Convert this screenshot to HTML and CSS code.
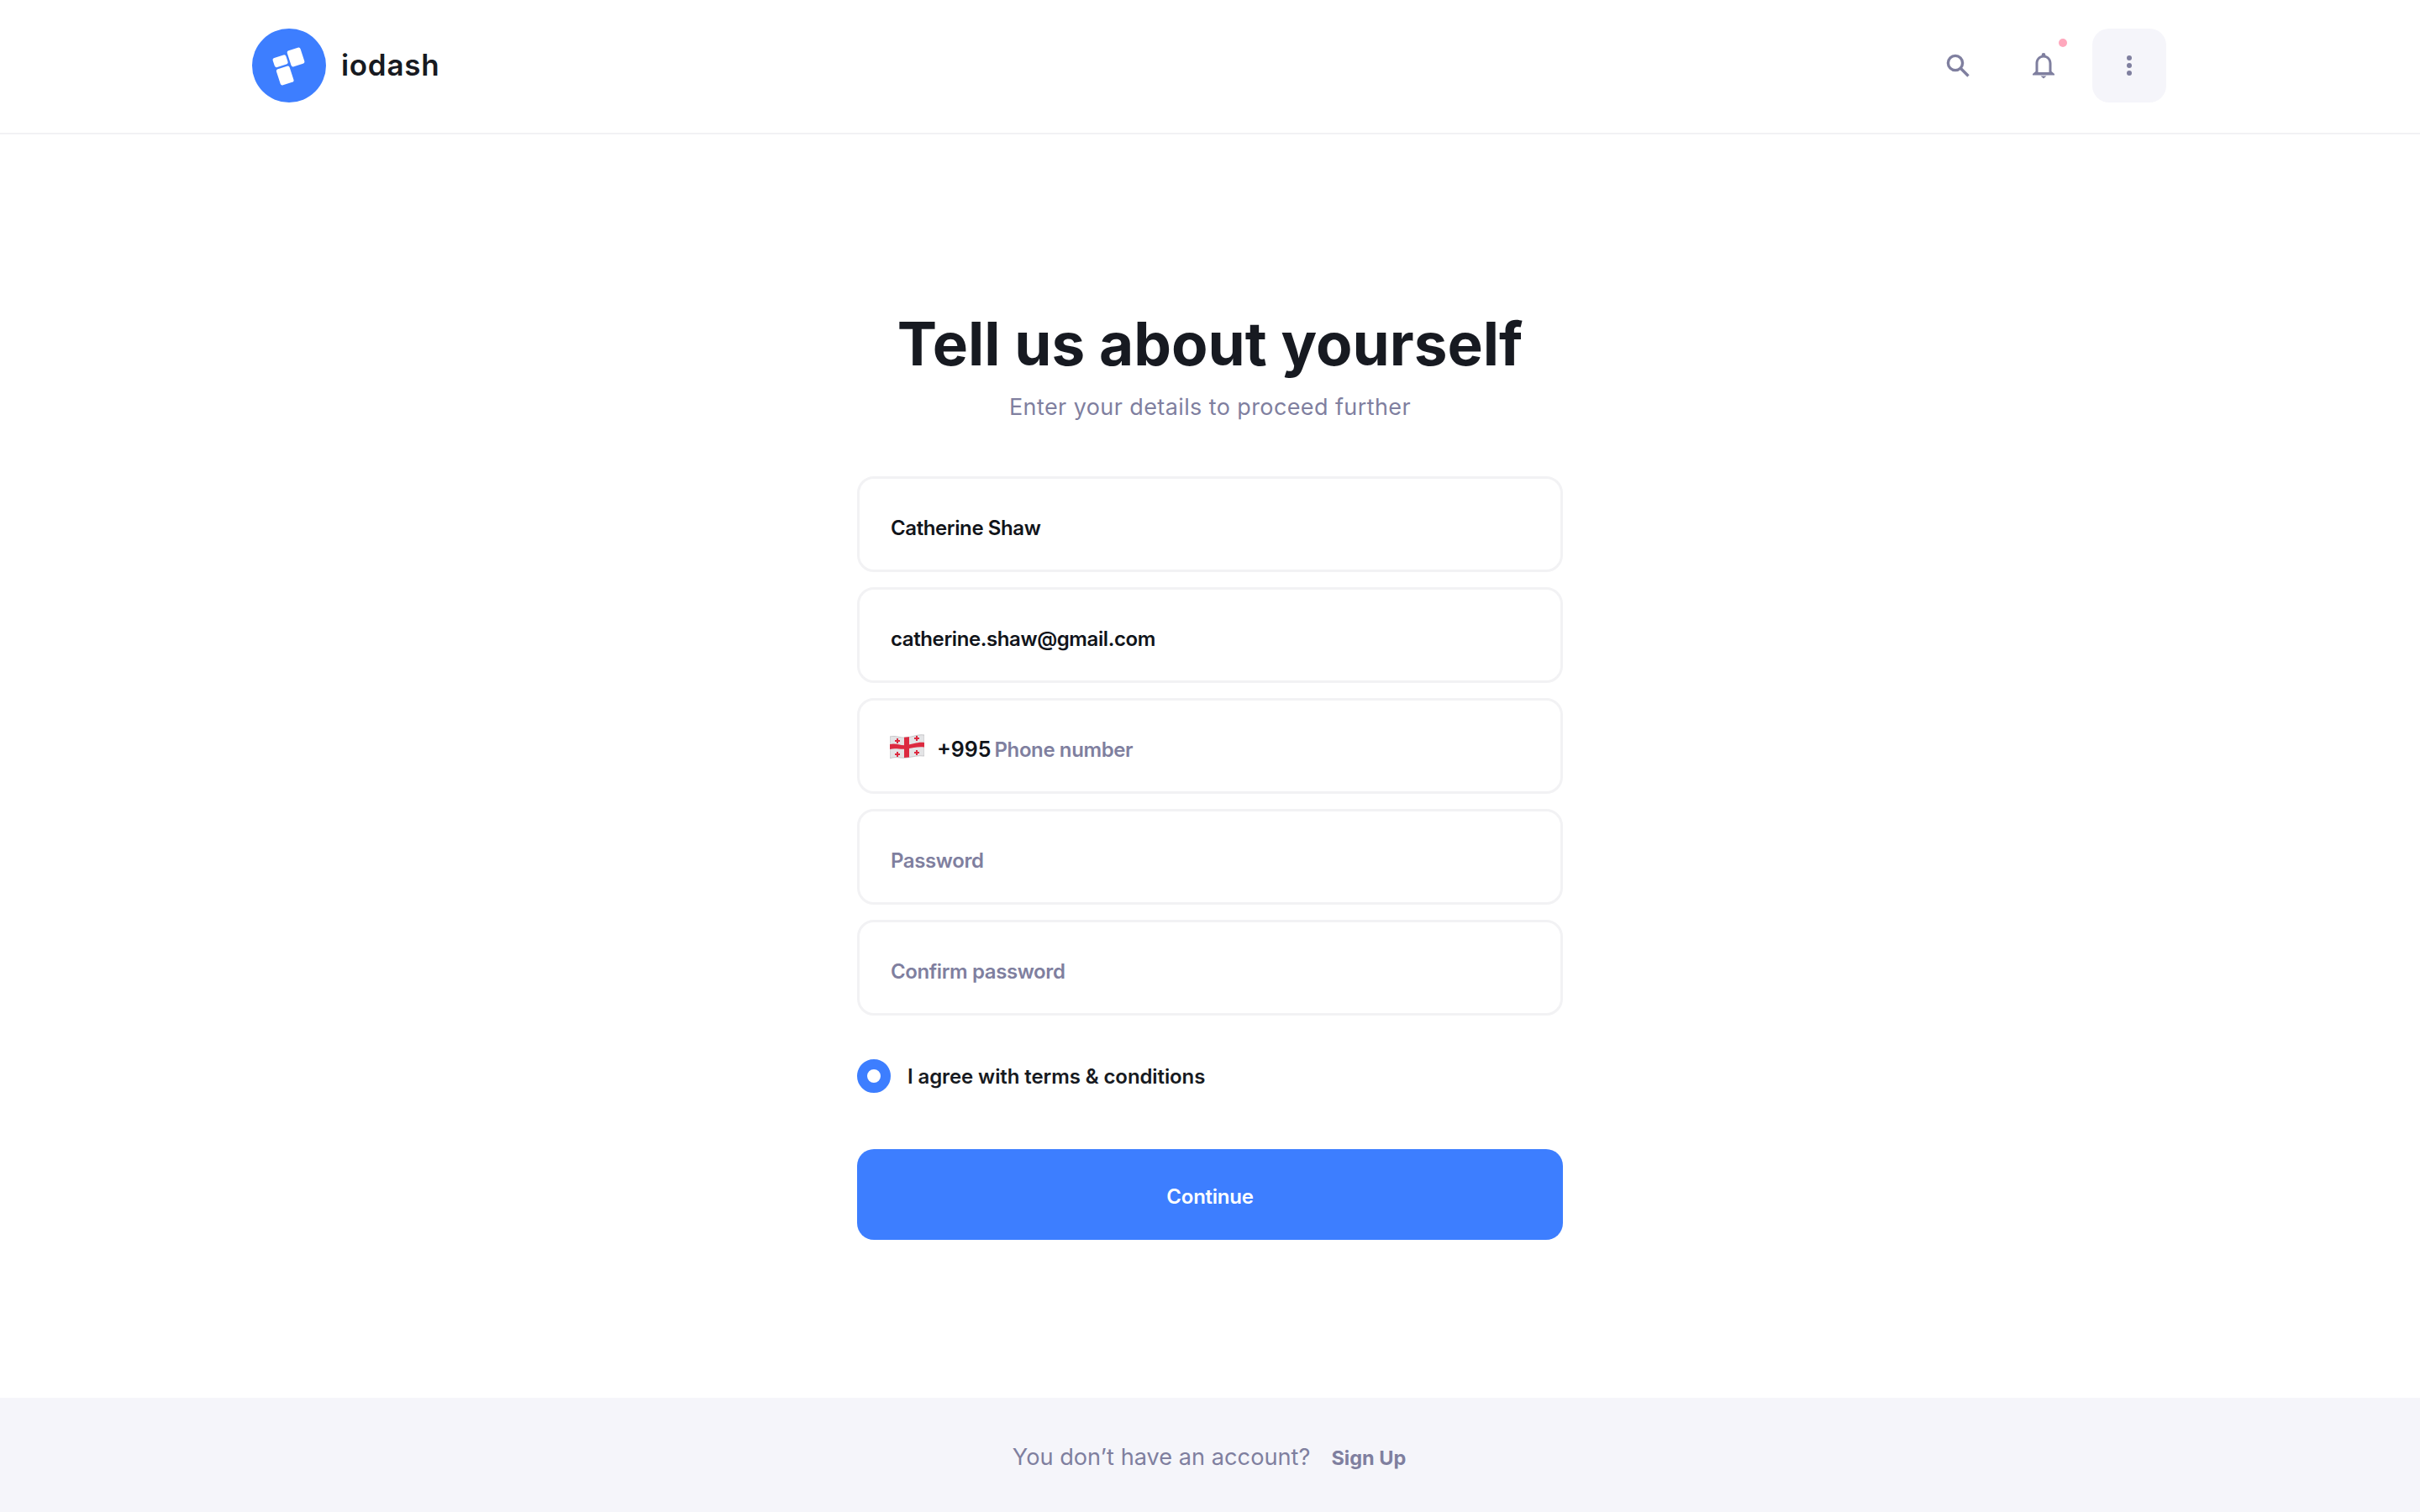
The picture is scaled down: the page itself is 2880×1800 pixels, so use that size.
FILE: index.html
```html
<!DOCTYPE html>
<html lang="en">
<head>
    <meta charset="UTF-8">
    <title>iodash - Tell us about yourself</title>
    <link rel="stylesheet" href="styles.css">
</head>
<body>
    <header class="topbar">
        <div class="brand">
            <span class="brand-logo">
                <svg viewBox="0 0 88 88" width="88" height="88">
                    <circle cx="44" cy="44" r="44" fill="#3d7eff"/>
                    <g fill="#fff" transform="rotate(-18 44 44)">
                        <rect x="27.500" y="30" width="16.500" height="11.500" rx="2.500"/>
                        <rect x="46.500" y="27" width="16.500" height="20" rx="2.500"/>
                        <rect x="27.500" y="44" width="16.500" height="20" rx="2.500"/>
                    </g>
                </svg>
            </span>
            <span class="brand-name">iodash</span>
        </div>
        <nav class="top-actions">
            <button class="icon-btn">
                <svg viewBox="0 0 28 28" width="28" height="28" fill="none" stroke="#7f7f9f" stroke-width="3.400">
                    <circle cx="11" cy="11" r="8.600"/>
                    <path d="M17 17l9.500 9.500"/>
                </svg>
            </button>
            <button class="icon-btn">
                <svg viewBox="0 0 28 32" width="28" height="32" fill="#7f7f9f">
                    <path d="M14 1a2.400 2.400 0 0 1 2.400 2.400v.5C20.800 5 23.500 8.800 23.500 13.500V23l3.500 3v1.500H1V26l3.500-3v-9.500C4.500 8.800 7.200 5 11.600 3.900v-.5A2.400 2.400 0 0 1 14 1zM14 6.500c-4 0-6.500 3-6.500 7V24h13V13.500c0-4-2.500-7-6.500-7z"/>
                    <path d="M10.500 28.500h7L14 31.500z"/>
                </svg>
                <span class="notif-dot"></span>
            </button>
            <button class="icon-btn icon-btn-active">
                <svg viewBox="0 0 8 28" width="8" height="28" fill="#7f7f9f">
                    <circle cx="4" cy="5" r="3"/>
                    <circle cx="4" cy="14" r="3"/>
                    <circle cx="4" cy="23" r="3"/>
                </svg>
            </button>
        </nav>
    </header>

    <main class="content">
        <h1>Tell us about yourself</h1>
        <p class="subtitle">Enter your details to proceed further</p>

        <form class="signup-form">
            <div class="field"><span class="value">Catherine Shaw</span></div>
            <div class="field"><span class="value">catherine.shaw@gmail.com</span></div>
            <div class="field field-phone">
                <svg class="flag" viewBox="0 0 41 29" width="41" height="29">
                    <path d="M0 3C7 1 12 5 20 4S33 0 41 1V26C33 25 28 27 20 28S7 26 0 29Z" fill="#e4e4e6" stroke="#bdbdc0" stroke-width=".8"/>
                    <path d="M0 12C7 10 12 14 20 13S33 9 41 10V15.500C33 14.500 28 16.500 20 17.500S7 16 0 18Z" fill="#dc2a40"/>
                    <path d="M17 3.800L23 3.300V27.500L17 28Z" fill="#dc2a40"/>
                    <g fill="#dc2a40">
                        <path d="M8 5h2v2h2v2h-2v2H8V9H6V7h2z"/>
                        <path d="M31 2h2v2h2v2h-2v2h-2V6h-2V4h2z"/>
                        <path d="M8 21h2v2h2v2h-2v2H8v-2H6v-2h2z"/>
                        <path d="M31 19h2v2h2v2h-2v2h-2v-2h-2v-2h2z"/>
                    </g>
                </svg>
                <span class="dial">+995</span>
                <span class="placeholder">Phone number</span>
            </div>
            <div class="field"><span class="placeholder">Password</span></div>
            <div class="field"><span class="placeholder">Confirm password</span></div>

            <label class="agree">
                <span class="radio"></span>
                <span>I agree with terms &amp; conditions</span>
            </label>

            <button type="button" class="continue-btn">Continue</button>
        </form>
    </main>

    <footer class="footer">
        <span class="footer-text">You don’t have an account?</span>
        <a class="footer-link">Sign Up</a>
    </footer>
</body>
</html>
```

FILE: styles.css
```css
* {
    box-sizing: border-box;
}

html, body {
    height: 100%;
}

body {
    margin: 0;
    display: flex;
    flex-direction: column;
    min-height: 1800px;
    font-family: 'Inter', 'Liberation Sans', sans-serif;
    background-color: #fff;
    color: #11141a;
}

.topbar {
    height: 160px;
    flex-shrink: 0;
    display: flex;
    justify-content: space-between;
    align-items: center;
    padding: 0 302px 2px 300px;
    border-bottom: 2px solid #f2f2f4;
}

.brand {
    display: flex;
    align-items: center;
    gap: 18px;
}

.brand-logo {
    display: flex;
}

.brand-name {
    margin-top: -2px;
    font-size: 35px;
    font-weight: 600;
    letter-spacing: 0.7px;
    color: #171a21;
}

.top-actions {
    display: flex;
    gap: 14px;
}

.icon-btn {
    position: relative;
    width: 88px;
    height: 88px;
    display: flex;
    align-items: center;
    justify-content: center;
    padding: 0;
    border: none;
    border-radius: 20px;
    background: none;
}

.icon-btn-active {
    background-color: #f5f5fa;
}

.notif-dot {
    position: absolute;
    top: 12px;
    right: 16px;
    width: 10px;
    height: 10px;
    border-radius: 50%;
    background-color: #ffa8bd;
}

.content {
    flex: 1;
    display: flex;
    flex-direction: column;
    align-items: center;
    padding-top: 203px;
}

h1 {
    margin: 0;
    font-size: 71px;
    line-height: 92px;
    font-weight: 700;
    color: #171a21;
}

.subtitle {
    margin: 10px 0 0;
    font-size: 27px;
    line-height: 40px;
    color: #7f7f9f;
    letter-spacing: 0.4px;
}

.signup-form {
    width: 840px;
    margin-top: 62px;
    display: flex;
    flex-direction: column;
    gap: 18px;
}

.field {
    height: 114px;
    display: flex;
    align-items: center;
    padding: 8px 38px 0 37px;
    border: 3px solid #f2f2f4;
    border-radius: 20px;
    font-size: 24px;
    font-weight: 600;
    letter-spacing: -0.4px;
}

.value {
    color: #11141a;
}

.placeholder {
    color: #7f7f9f;
}

.field-phone {
    padding-left: 36px;
}

.flag {
    margin: -8px 15px 0 0;
}

.dial {
    margin-right: 4px;
    font-size: 25px;
    letter-spacing: 0;
    color: #11141a;
}

.agree {
    display: flex;
    align-items: center;
    gap: 20px;
    margin-top: 34px;
    font-size: 24px;
    font-weight: 600;
    letter-spacing: -0.1px;
    color: #171a21;
}

.radio {
    width: 40px;
    height: 40px;
    border-radius: 50%;
    border: 12px solid #3d7eff;
    background-color: #fff;
}

.continue-btn {
    height: 108px;
    margin-top: 49px;
    padding-top: 6px;
    border: none;
    border-radius: 20px;
    background-color: #3d7eff;
    color: #fff;
    font-family: inherit;
    font-size: 24px;
    font-weight: 600;
    letter-spacing: -0.25px;
}

.footer {
    height: 136px;
    flex-shrink: 0;
    display: flex;
    align-items: center;
    justify-content: center;
    gap: 25px;
    padding: 4px 2px 0 0;
    background-color: #f5f5fa;
    color: #7f7f9f;
}

.footer-text {
    font-size: 27.200px;
}

.footer-link {
    margin-top: 3px;
    font-size: 23.500px;
    font-weight: 700;
}
```
